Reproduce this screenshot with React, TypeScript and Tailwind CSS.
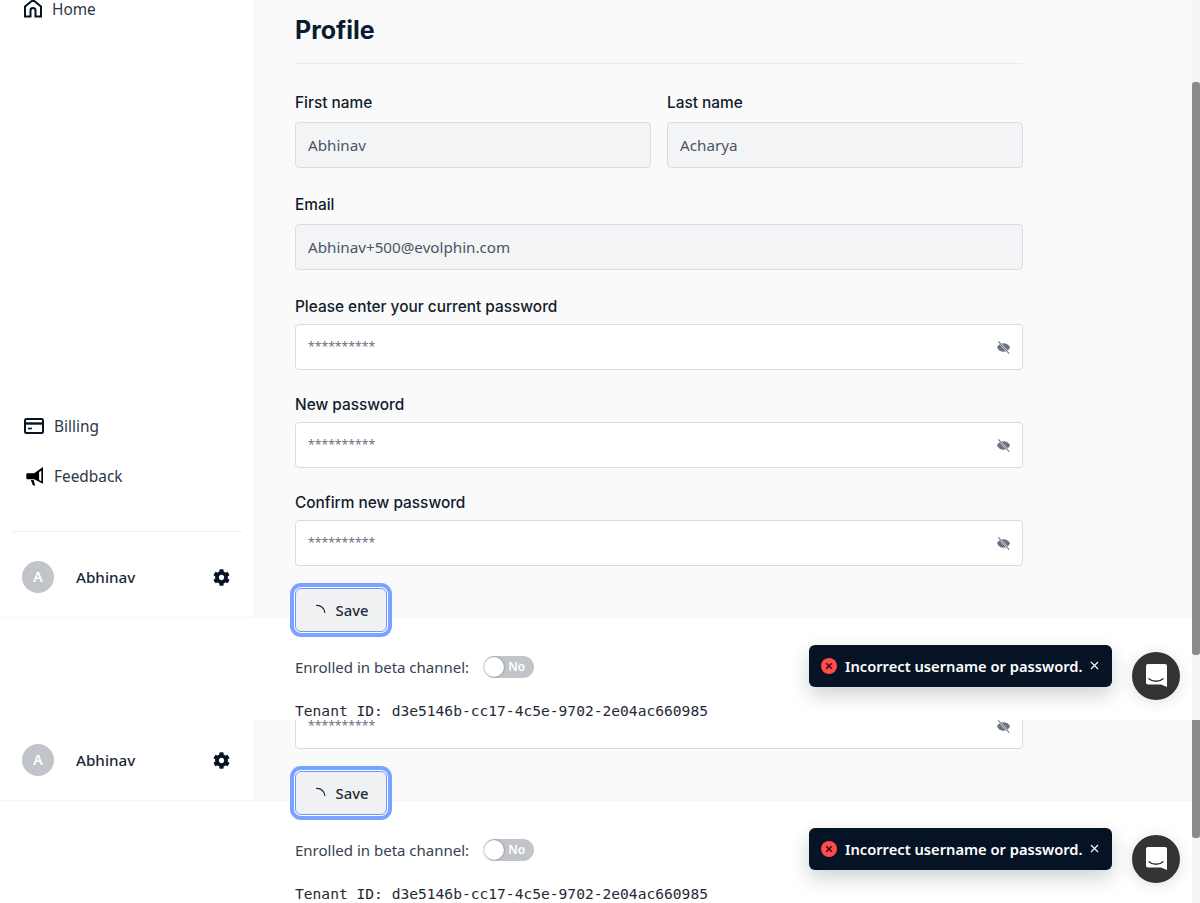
import { FaCog } from "react-icons/fa";

const labelCls = "block text-[15.4px] leading-[22px] font-medium text-[#111c2d] font-['Inter',sans-serif]";

function HomeIcon() {
  return (
    <svg width="18" height="19" viewBox="0 0 18 19" fill="none" stroke="#061325" strokeWidth="2" className="shrink-0 -mt-0.5">
      <path d="M1 17.5V7.5L9 1l8 6.5v10h-5.5v-6a2.5 2.5 0 0 0-5 0v6z" strokeLinejoin="miter" />
    </svg>
  );
}

function CardIcon() {
  return (
    <svg width="20" height="16" viewBox="0 0 20 16" fill="none" className="shrink-0">
      <rect x="1" y="1" width="18" height="14" rx="1.5" stroke="#061325" strokeWidth="2" />
      <path d="M1 5.5h18" stroke="#061325" strokeWidth="2.4" />
      <path d="M4 10.5h4" stroke="#061325" strokeWidth="1.6" />
    </svg>
  );
}

function MegaphoneIcon() {
  return (
    <svg width="20" height="20" viewBox="-1.6 0 18 18" className="shrink-0">
      <path d="M1.5 6.5h6L15.5 1v15L7.5 12h-6a1 1 0 0 1-1-1V7.5a1 1 0 0 1 1-1z" fill="#000" />
      <path d="M12 5.5v7l2 1.2V4.2z" fill="#fff" />
      <path d="M4.5 12.5l2 5h2l-1.500-5z" fill="#000" />
    </svg>
  );
}

function EyeOffIcon() {
  return (
    <svg width="15" height="15" viewBox="0 0 16 16" className="shrink-0 -mr-px">
      <path d="M1 8c1.500-3 4-4.500 7-4.500s5.500 1.500 7 4.500c-1.500 3-4 4.500-7 4.500S2.500 11 1 8z" fill="#6b7280" />
      <circle cx="8" cy="8" r="1.100" fill="#d1d5db" />
      <path d="M2.500 1.500l11.500 13" stroke="#fff" strokeWidth="2.200" />
      <path d="M2.500 1.500l11.500 13" stroke="#6b7280" strokeWidth="1.100" />
    </svg>
  );
}

function NavItem({ icon, label }: { icon: React.ReactNode; label: string }) {
  return (
    <div className="flex items-center h-5 pl-6 gap-2.5 text-[15.4px] text-[#2b3648]">
      {icon}
      <span className="pt-0.5">{label}</span>
    </div>
  );
}

function UserRow() {
  return (
    <div className="flex items-center pl-[22px] pr-6 pb-6">
      <div className="w-8 h-8 rounded-full bg-[#c1c4c9] flex items-center justify-center text-white text-sm font-semibold">A</div>
      <span className="ml-[22px] flex-1 text-[15.2px] font-medium text-[#1c2738]">Abhinav</span>
      <FaCog size={17} color="#061325" />
    </div>
  );
}

function Field({ label, value, disabled, masked, tight }: { label: string; value: string; disabled?: boolean; masked?: boolean; tight?: boolean }) {
  return (
    <div className="w-full">
      <label className={`${labelCls} ${tight ? "mb-1.5" : "mb-2"}`}>{label}</label>
      <InputBox value={value} disabled={disabled} masked={masked} />
    </div>
  );
}

function InputBox({ value, disabled, masked }: { value: string; disabled?: boolean; masked?: boolean }) {
  return (
    <div className={`h-[46px] flex items-center justify-between px-3 pt-px border border-[#d9dce2] rounded-[4px] ${disabled ? "bg-[#f3f4f6] text-[#4b5563] text-[15.2px]" : "bg-white text-[#6b7280] text-[12.2px]"}`}>
      <span>{value}</span>
      {masked && <EyeOffIcon />}
    </div>
  );
}

function SaveButton() {
  return (
    <button className="relative z-20 w-[92px] h-[44px] flex items-center justify-center gap-2 pt-px rounded-md bg-[#f0f1f3] border border-[#6f95ff] ring-4 ring-[#7aa2ff] ring-offset-1 ring-offset-white text-[14.8px] font-medium text-[#1f2937]">
      <svg width="14" height="14" viewBox="0 0 14 14" fill="none" stroke="#1f2937" strokeWidth="1.2">
        <path d="M2 1.500A8 8 0 0 1 11 9" />
      </svg>
      Save
    </button>
  );
}

function BottomBand() {
  return (
    <div className="relative z-10 bg-white h-[103px] pl-[295px] pt-[38px] border-t border-[#f5f6f7]">
      <div className="flex items-center h-[22px] text-[15px] text-[#374151]">
        <span>Enrolled in beta channel:</span>
        <div className="relative ml-[15px] w-[50px] h-[22px] rounded-full bg-[#c1c4c9]">
          <div className="absolute left-0 top-px w-5 h-5 rounded-full bg-white shadow-[0_0_2px_rgba(0,0,0,0.5)]" />
          <span className="absolute left-[24px] top-[2px] text-xs leading-[18px] font-semibold text-white">No</span>
        </div>
      </div>
      <p className="mt-[23px] h-5 leading-5 text-[14.6px] text-[#1f2937] font-['DejaVu_Sans_Mono',monospace]">
        Tenant ID: d3e5146b-cc17-4c5e-9702-2e04ac660985
      </p>

      <div className="absolute right-[80px] top-[27px] w-[303px] h-[42px] flex items-center pl-3 rounded-md bg-[#061325] shadow-[0_8px_20px_rgba(15,23,42,0.2)]">
        <span className="w-4 h-4 rounded-full bg-[#ff4b4b] flex items-center justify-center">
          <svg width="8" height="8" viewBox="0 0 8 8" stroke="#3a0d14" strokeWidth="1.6">
            <path d="M1.200 1.200l5.600 5.600M6.800 1.200L1.200 6.800" />
          </svg>
        </span>
        <span className="ml-2 text-[14.7px] font-semibold text-white whitespace-nowrap">Incorrect username or password.</span>
        <svg width="9" height="9" viewBox="0 0 9 9" stroke="#fff" strokeWidth="1.1" className="ml-[7px] -mt-0.5">
          <path d="M1 1l7 7M8 1L1 8" />
        </svg>
      </div>

      <div className="absolute right-3 top-[34px] w-12 h-12 rounded-full bg-[#333] shadow-[0_2px_16px_rgba(0,0,0,0.12)]">
        <svg width="48" height="48" viewBox="0 0 48 48">
          <path d="M16 12h17a2 2 0 0 1 2 2v21l-6-2.500H16a2 2 0 0 1-2-2V14a2 2 0 0 1 2-2z" fill="#fff" />
          <path d="M16.500 26.500c4 3.600 11 3.600 15 0" fill="none" stroke="#333" strokeWidth="1.5" />
        </svg>
      </div>
    </div>
  );
}

export default function App() {
  return (
    <div className="w-[1200px] h-[903px] overflow-hidden flex bg-white font-['Noto_Sans',sans-serif]">
      <div className="w-[1192px] flex flex-col">
        {/* first copy of the page */}
        <div className="h-[617px] flex">
          <aside className="w-[255px] h-full flex flex-col bg-white border-r border-[#f1f2f4]">
            <div className="h-[18px] flex items-center">
              <NavItem icon={<HomeIcon />} label="Home" />
            </div>
            <div className="flex-1" />
            <NavItem icon={<CardIcon />} label="Billing" />
            <div className="mt-[30px]">
              <NavItem icon={<MegaphoneIcon />} label="Feedback" />
            </div>
            <div className="mx-3 mt-[45px] mb-[29px] border-t border-[#eceef0]" />
            <UserRow />
          </aside>
          <main className="flex-1 bg-[#fafafb] pl-10 pt-3">
            <div className="w-[728px]">
              <h1 className="text-[25px] leading-9 font-bold text-[#0b1a2e] font-['Inter',sans-serif]">Profile</h1>
              <div className="mt-[15px] mb-7 border-t border-[#e8eaed]" />
              <div className="flex gap-4">
                <Field label="First name" value="Abhinav" disabled />
                <Field label="Last name" value="Acharya" disabled />
              </div>
              <div className="mt-[26px]">
                <Field label="Email" value="Abhinav+500@evolphin.com" disabled />
              </div>
              <div className="mt-[26px]">
                <Field label="Please enter your current password" value="**********" masked tight />
              </div>
              <div className="mt-6">
                <Field label="New password" value="**********" masked tight />
              </div>
              <div className="mt-6">
                <Field label="Confirm new password" value="**********" masked tight />
              </div>
              <div className="mt-[22px]">
                <SaveButton />
              </div>
            </div>
          </main>
        </div>
        <BottomBand />

        {/* second copy, shifted up */}
        <div className="h-[80px] flex">
          <aside className="w-[255px] h-full pt-6 bg-white border-r border-[#f1f2f4]">
            <UserRow />
          </aside>
          <main className="flex-1 bg-[#fafafb] pl-10">
            <div className="w-[728px] -mt-[17px]">
              <InputBox value="**********" masked />
              <div className="mt-[22px]">
                <SaveButton />
              </div>
            </div>
          </main>
        </div>
        <BottomBand />
      </div>

      {/* scrollbar */}
      <div className="w-2 flex flex-col bg-[#f5f5f5]">
        <div className="h-[82px] shrink-0" />
        <div className="h-[573px] shrink-0 bg-[#8a8a8a] rounded-[3px]" />
        <div className="h-[65px] shrink-0" />
        <div className="h-[118px] shrink-0 bg-[#8a8a8a] rounded-b-[3px]" />
      </div>
    </div>
  );
}
